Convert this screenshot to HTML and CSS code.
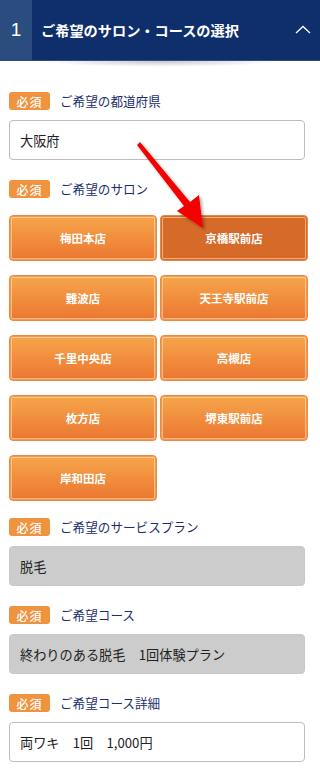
FILE: index.html
```html
<!DOCTYPE html>
<html lang="ja">
<head>
<meta charset="utf-8">
<link rel="stylesheet" href="styles.css">
</head>
<body>
<header class="head">
  <div class="num">1</div>
  <div class="title">ご希望のサロン・コースの選択</div>
  <svg class="chev" width="16" height="9" viewBox="0 0 16 9"><path d="M1 8 L8 1.5 L15 8" fill="none" stroke="#fff" stroke-width="1.3"/></svg>
</header>
<main class="content">
  <section class="field">
    <div class="label"><span class="badge">必須</span><span class="ltext">ご希望の都道府県</span></div>
    <div class="input">大阪府</div>
  </section>
  <section class="field salon">
    <div class="label"><span class="badge">必須</span><span class="ltext">ご希望のサロン</span></div>
    <div class="grid">
      <div class="btn">梅田本店</div>
      <div class="btn sel">京橋駅前店</div>
      <div class="btn">難波店</div>
      <div class="btn">天王寺駅前店</div>
      <div class="btn">千里中央店</div>
      <div class="btn">高槻店</div>
      <div class="btn">枚方店</div>
      <div class="btn">堺東駅前店</div>
      <div class="btn">岸和田店</div>
    </div>
  </section>
  <section class="field">
    <div class="label"><span class="badge">必須</span><span class="ltext">ご希望のサービスプラン</span></div>
    <div class="input gray">脱毛</div>
  </section>
  <section class="field">
    <div class="label"><span class="badge">必須</span><span class="ltext">ご希望コース</span></div>
    <div class="input gray">終わりのある脱毛　1回体験プラン</div>
  </section>
  <section class="field">
    <div class="label"><span class="badge">必須</span><span class="ltext">ご希望コース詳細</span></div>
    <div class="input">両ワキ　1回　1,000円</div>
  </section>
</main>
<svg class="arrow" width="320" height="771" viewBox="0 0 320 771">
  <defs>
    <filter id="sh" x="-20%" y="-20%" width="140%" height="140%">
      <feDropShadow dx="2" dy="2" stdDeviation="1.5" flood-color="#000" flood-opacity="0.35"/>
    </filter>
  </defs>
  <polygon filter="url(#sh)" fill="#f40000" points="137,145 140,142 190,202 199,195 203,228 177,211 184,206"/>
</svg>
</body>
</html>
```
FILE: styles.css
```css
* { box-sizing: border-box; }
html, body { margin: 0; padding: 0; background: #fff; }
body {
  width: 320px;
  font-family: "Noto Sans CJK JP", "Noto Sans", "Liberation Sans", sans-serif;
  position: relative;
}
.head {
  height: 61px;
  background: #0f2f6c;
  border-bottom: 1px solid #2b4d86;
  display: flex;
  align-items: center;
  position: relative;
  color: #fff;
}
.head::after {
  content: "";
  position: absolute;
  left: 40px;
  right: 40px;
  top: 61px;
  height: 6px;
  background: radial-gradient(ellipse at 50% 0%, rgba(0,0,0,0.22) 0%, rgba(0,0,0,0.08) 45%, rgba(0,0,0,0) 70%);
}
.num {
  width: 32px;
  height: 60px;
  background: #2b4c7f;
  display: flex;
  align-items: center;
  justify-content: center;
  font-family: "Liberation Sans", sans-serif;
  font-size: 19px;
}
.title {
  margin-left: 9px;
  font-size: 14.2px;
  font-weight: 700;
  flex: 1;
  line-height: 1;
}
.chev { margin-right: 9px; margin-top: -2px; }
.content {
  padding: 31px 15px 0 9px;
  display: flex;
  flex-direction: column;
  gap: 20px;
}
.field { display: flex; flex-direction: column; gap: 10px; }
.salon { gap: 17px; margin-bottom: -3px; }
.label { display: flex; align-items: center; height: 18px; }
.badge {
  width: 41px;
  height: 18px;
  background: #f0933f;
  border-radius: 3px;
  color: #fff;
  font-size: 12px;
  font-weight: 500;
  display: flex;
  align-items: center;
  justify-content: center;
  letter-spacing: 1px;
}
.ltext {
  margin-left: 10px;
  color: #1b2f6c;
  font-size: 12.6px;
  line-height: 1;
}
.input {
  height: 40px;
  border: 1px solid #bdbdbd;
  border-radius: 4px;
  background: #fff;
  display: flex;
  align-items: center;
  padding-left: 10px;
  font-size: 13.2px;
  color: #222;
  width: 296px;
}
.input.gray { background: #cccccc; border-color: #c8c8c8; }
.grid {
  display: grid;
  grid-template-columns: 148px 148px;
  column-gap: 3px;
  row-gap: 14px;
}
.btn {
  height: 46px;
  border-radius: 4px;
  background: linear-gradient(#f6a64b, #ec7631);
  border: 1px solid #ee8a3e;
  box-shadow: inset 0 0 0 1px #f39a4a, inset 0 0 0 2px rgba(255,255,255,0.45);
  color: #fff;
  font-size: 11.5px;
  font-weight: 700;
  display: flex;
  align-items: center;
  justify-content: center;
}
.btn.sel {
  background: #d66a28;
  border-color: #e08a45;
  box-shadow: inset 0 0 0 1px #d66a28, inset 0 0 0 2px rgba(255,220,180,0.6);
}
.arrow { position: absolute; left: 0; top: 0; pointer-events: none; }
```
